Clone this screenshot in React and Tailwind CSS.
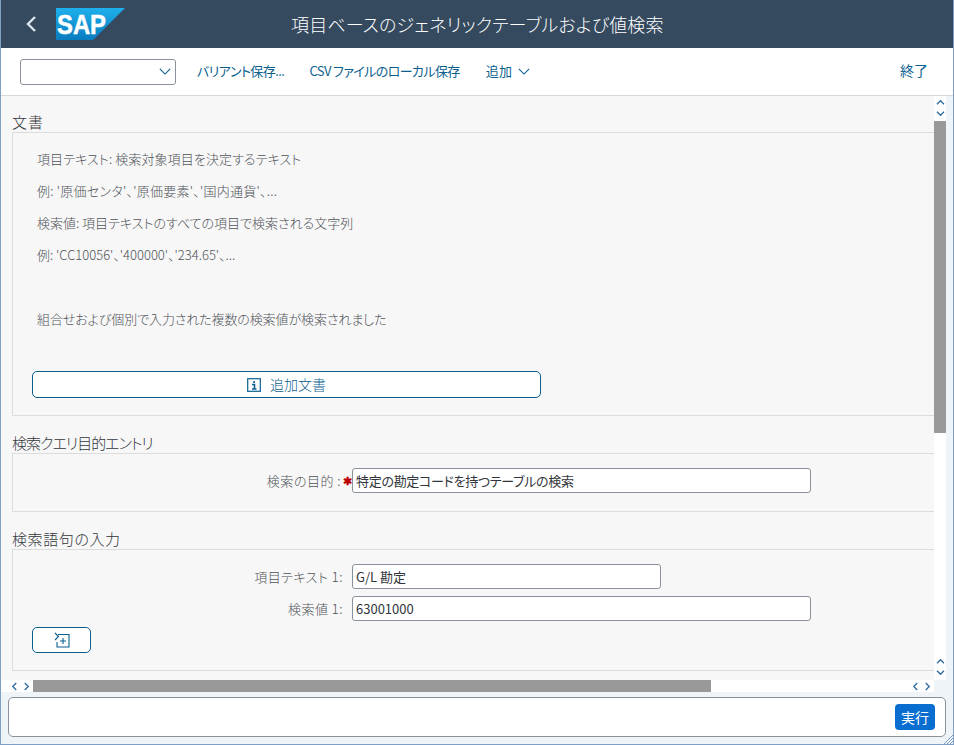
const F = '"Noto Sans CJK JP", "Noto Sans", sans-serif';

function Chev({ d, className = "" }) {
  const paths = {
    up: "M1 6 L5 2 L9 6",
    down: "M1 2 L5 6 L9 2",
    left: "M6 1 L2 5 L6 9",
    right: "M2 1 L6 5 L2 9",
  };
  const box = d === "up" || d === "down" ? "0 0 10 8" : "0 0 8 10";
  const size = d === "up" || d === "down" ? "w-[9px] h-[7px]" : "w-[7px] h-[9px]";
  return (
    <svg viewBox={box} className={size + " " + className} fill="none" stroke="#2f6a9c" strokeWidth="1.5">
      <path d={paths[d]} />
    </svg>
  );
}

function Logo() {
  return (
    <svg viewBox="0 0 69 32" className="w-[69px] h-[32px] ml-[19px]">
      <defs>
        <linearGradient id="sapg" x1="0" y1="0" x2="0" y2="1">
          <stop offset="0" stopColor="#1eb0ec" />
          <stop offset="1" stopColor="#0a7cc0" />
        </linearGradient>
      </defs>
      <polygon points="0,0 69,0 37,32 0,32" fill="url(#sapg)" />
      <text x="1" y="25.5" fontFamily='"Liberation Sans", sans-serif' fontWeight="700" fontSize="27" fill="#fff" stroke="#fff" strokeWidth="0.5" textLength="49" lengthAdjust="spacingAndGlyphs">SAP</text>
    </svg>
  );
}

function Section({ title, titleClass = "", children, className = "", top = "mt-0" }) {
  return (
    <section className={top}>
      <h2 className={"text-[15px] leading-[20px] text-[#32363a] font-light pl-[11px] h-[20px] " + titleClass}>{title}</h2>
      <div className={"ml-[11px] border-l border-y border-[#dcdcdc] " + className}>{children}</div>
    </section>
  );
}

function Field({ label, value, width, req, valueClass = "" }) {
  return (
    <div className="flex items-center h-[25px]">
      <div className="w-[339px] shrink-0 text-right text-[13px] font-light tracking-[0.5px] text-[#4f5358] flex justify-end items-center">
        <span>{label}</span>
        {req && <span className="text-[#bb0000] font-bold text-[11px] leading-none w-[10px] ml-[1px] tracking-normal">✱</span>}
        {!req && <span className="w-[9px]"></span>}
      </div>
      <div className={"h-[25px] bg-white border border-[#89919a] rounded-[3px] text-[13px] text-[#32363a] pl-[3px] flex items-center " + width + " " + valueClass}>{value}</div>
    </div>
  );
}

export default function App() {
  return (
    <div className="w-[954px] h-[745px] flex flex-col bg-[#eff4f9] border-x border-b border-[#7f9fc6] overflow-hidden [font-feature-settings:'palt']" style={{ fontFamily: F }}>
      <header className="h-[48px] shrink-0 bg-[#354a5f] flex items-center relative">
        <svg viewBox="0 0 12 18" className="w-[12px] h-[18px] ml-[24px]" fill="none" stroke="#dbe6f0" strokeWidth="2.4">
          <path d="M10 2 L3 9 L10 16" />
        </svg>
        <Logo />
        <h1 className="absolute left-[290px] top-[9px] text-[18px] leading-[30px] tracking-[0.15px] text-white font-light whitespace-nowrap">項目ベースのジェネリックテーブルおよび値検索</h1>
      </header>

      <div className="h-[48px] shrink-0 bg-white border-b border-[#d9d9d9] flex items-center pl-[19px] pr-[25px] text-[13px] text-[#0a5f8f]">
        <div className="w-[156px] h-[26px] border border-[#89919a] rounded-[3px] flex items-center justify-end pr-[4px]">
          <svg viewBox="0 0 14 8" className="w-[12px] h-[7px]" fill="none" stroke="#0a5f8f" strokeWidth="1.3"><path d="M1 1 L7 7 L13 1" /></svg>
        </div>
        <span className="ml-[21px] mb-[2px] tracking-[-0.55px]">バリアント保存...</span>
        <span className="ml-[25px] mb-[2px] tracking-[-0.6px]">CSV ファイルのローカル保存</span>
        <span className="ml-[26px] mb-[2px] tracking-[0.2px]">追加</span>
        <svg viewBox="0 0 14 8" className="w-[12px] h-[7px] ml-[6px]" fill="none" stroke="#0a5f8f" strokeWidth="1.3"><path d="M1 1 L7 7 L13 1" /></svg>
        <span className="ml-auto mb-[2px] text-[14px]">終了</span>
      </div>

      <div className="flex-1 min-h-0 flex">
        <main className="w-[933px] bg-[#f7f7f7] overflow-hidden flex flex-col">
          <div className="flex-1 min-h-0 overflow-hidden pt-[16px]">
            <Section title="文書" titleClass="tracking-[1px]" className="h-[284px] pl-[24px] pt-[17px] text-[13px] font-light text-[#4f5358]">
              <p className="h-[32px] leading-[18px] tracking-[0.1px]">項目テキスト: 検索対象項目を決定するテキスト</p>
              <p className="h-[32px] leading-[18px] tracking-[0.25px]">例: '原価センタ'、'原価要素'、'国内通貨'、...</p>
              <p className="h-[32px] leading-[18px]">検索値: 項目テキストのすべての項目で検索される文字列</p>
              <p className="h-[64px] leading-[18px]">例: 'CC10056'、'400000'、'234.65'、...</p>
              <p className="h-[61px] leading-[18px] tracking-[-0.1px]">組合せおよび個別で入力された複数の検索値が検索されました</p>
              <button className="ml-[-5px] w-[509px] h-[27px] bg-white border border-[#0a5f8f] rounded-[5px] flex items-center justify-center text-[#0a5f8f] text-[14px] font-light">
                <svg viewBox="0 0 14 14" className="w-[14px] h-[14px] mr-[9px]" fill="none" stroke="#0a5f8f">
                  <rect x="0.7" y="0.7" width="12.6" height="12.6" strokeWidth="1.2" />
                  <path d="M7 3 V5 M5 6.5 H7.5 V11 M5 11 H9.5" strokeWidth="1.6" />
                </svg>
                追加文書
              </button>
            </Section>
            <Section title="検索クエリ目的エントリ" titleClass="tracking-[-1px]" top="mt-[17px]" className="h-[59px] pt-[14px]">
              <Field label="検索の目的 :" req value="特定の勘定コードを持つテーブルの検索" width="w-[459px]" valueClass="tracking-[-0.3px]" />
            </Section>
            <Section title="検索語句の入力" titleClass="tracking-[0.6px]" top="mt-[17px]" className="h-[122px] pt-[14px]">
              <Field label="項目テキスト 1:" value="G/L 勘定" width="w-[309px]" />
              <div className="h-[7px]" />
              <Field label="検索値 1:" value="63001000" width="w-[459px]" />
              <button className="mt-[6px] ml-[19px] w-[59px] h-[26px] bg-white border border-[#0a5f8f] rounded-[5px] flex items-center justify-center">
                <svg viewBox="0 0 16 16" className="w-[16px] h-[16px]" fill="none" stroke="#0a5f8f" strokeWidth="1.1">
                  <path d="M1 1 L4.5 4.5 L1 8" />
                  <path d="M4 2.5 H15 V15 H3 V10" />
                  <path d="M9 6 V12 M6 9 H12" />
                </svg>
              </button>
            </Section>
          </div>
          <div className="h-[12px] shrink-0 bg-white flex items-center">
            <div className="w-[32px] shrink-0 flex items-center pl-[10px] gap-[5px]"><Chev d="left" /><Chev d="right" /></div>
            <div className="w-[678px] h-[12px] bg-[#999999]" />
            <div className="flex-1 flex items-center justify-end gap-[5px] pr-[3px]"><Chev d="left" /><Chev d="right" /></div>
          </div>
        </main>
        <aside className="w-[12px] h-[584px] bg-white flex flex-col">
          <div className="h-[25px] shrink-0 flex flex-col items-center pt-[3px] gap-[4px]"><Chev d="up" /><Chev d="down" /></div>
          <div className="h-[312px] bg-[#999999]" />
          <div className="flex-1 flex flex-col items-center justify-end pb-[4px] gap-[4px]"><Chev d="up" /><Chev d="down" /></div>
        </aside>
        <div className="flex-1 bg-[#eff4f9]" />
      </div>

      <footer className="h-[52px] shrink-0 bg-[#eff4f9] pt-[5px] pl-[7px] pr-[7px] relative">
        <div className="h-[40px] bg-white border border-[#89919a] rounded-[5px] flex items-center justify-end pr-[10px]">
          <button className="w-[40px] h-[26px] bg-[#0a6ed1] text-white rounded-[4px] text-[14px] leading-none">実行</button>
        </div>
        <svg viewBox="0 0 10 10" className="absolute right-0 bottom-0 w-[10px] h-[10px]" fill="none" stroke="#7f9fc6" strokeWidth="1"><path d="M1 10 L10 1 M4 10 L10 4 M7 10 L10 7" /></svg>
      </footer>
    </div>
  );
}
